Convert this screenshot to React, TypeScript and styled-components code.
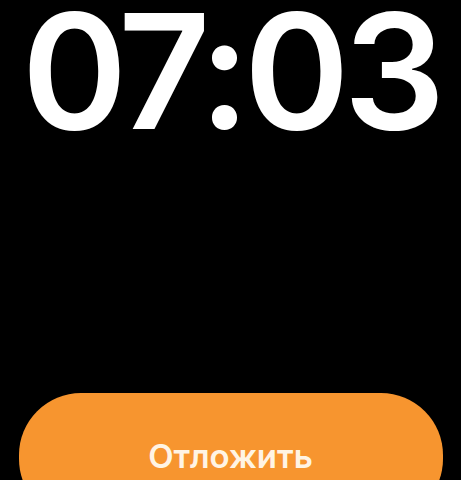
import styled, { createGlobalStyle } from "styled-components";

const GlobalStyle = createGlobalStyle`
  html, body {
    margin: 0;
    padding: 0;
    background: #000;
  }
  body {
    font-family: Inter, "Noto Sans", sans-serif;
  }
`;

const Screen = styled.div`
  width: 461px;
  height: 480px;
  overflow: hidden;
  background: #000;
  display: flex;
  flex-direction: column;
  align-items: center;
`;

const Time = styled.div`
  margin-top: 9px;
  color: #fff;
  font-family: Inter, sans-serif;
  font-weight: 600;
  font-size: 160px;
  line-height: 0.78;
  letter-spacing: -6px;
`;

const Spacer = styled.div`
  flex: 1;
`;

const SnoozeButton = styled.button`
  flex: none;
  width: 424px;
  height: 128px;
  margin-bottom: -41px;
  border: 0;
  border-radius: 62px;
  background: #f7952f;
  color: #fff4e4;
  font-family: Inter, "Noto Sans", sans-serif;
  font-weight: 600;
  font-size: 33px;
  display: flex;
  justify-content: center;
  align-items: flex-start;
  padding-top: 43px;
  cursor: pointer;
`;

export default function App() {
  return (
    <>
      <GlobalStyle />
      <Screen>
        <Time>07:03</Time>
        <Spacer />
        <SnoozeButton>Отложить</SnoozeButton>
      </Screen>
    </>
  );
}
